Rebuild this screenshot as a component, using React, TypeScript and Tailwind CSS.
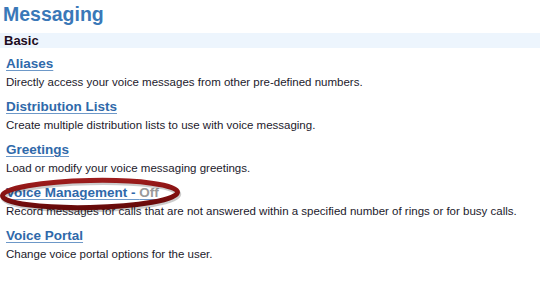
const items = [
  {
    title: "Aliases",
    desc: "Directly access your voice messages from other pre-defined numbers.",
  },
  {
    title: "Distribution Lists",
    desc: "Create multiple distribution lists to use with voice messaging.",
  },
  {
    title: "Greetings",
    desc: "Load or modify your voice messaging greetings.",
  },
  {
    title: "Voice Management - ",
    status: "Off",
    desc: "Record messages for calls that are not answered within a specified number of rings or for busy calls.",
    circled: true,
  },
  {
    title: "Voice Portal",
    desc: "Change voice portal options for the user.",
  },
];

function Circle() {
  return (
    <svg
      className="absolute left-[-6px] top-[-10px] z-10 pointer-events-none"
      width="186"
      height="42"
      viewBox="0 0 186 42"
    >
      <defs>
        <linearGradient id="ring" x1="0" y1="0" x2="0" y2="1">
          <stop offset="0" stopColor="#9c1c1c" />
          <stop offset="0.5" stopColor="#851111" />
          <stop offset="1" stopColor="#650a0a" />
        </linearGradient>
      </defs>
      <g transform="rotate(-1.2 90 19)">
        <ellipse cx="91" cy="21" rx="87.5" ry="13.5" fill="none" stroke="#000" strokeOpacity="0.2" strokeWidth="5.5" />
        <ellipse cx="90" cy="19" rx="87.5" ry="13.5" fill="none" stroke="url(#ring)" strokeWidth="5" />
      </g>
    </svg>
  );
}

export default function App() {
  return (
    <div className="w-[540px] h-[301px] bg-white overflow-hidden font-['Liberation_Sans',Arial,sans-serif]">
      {/* Page title */}
      <h1 className="pt-[3px] pl-[3px] text-[19.5px] leading-[22px] font-bold text-[#3a78b8]">
        Messaging
      </h1>

      {/* Section band */}
      <div className="mt-[8px] h-[15px] bg-[#edf5fd] pl-[4px] text-[13px] leading-[15px] font-bold text-[#1d0b20]">
        Basic
      </div>

      {/* Links */}
      <div className="mt-[8px] pl-[6px] flex flex-col gap-[10px]">
        {items.map((item) => (
          <div key={item.title} className="relative">
            {item.circled && <Circle />}
            <a
              href="#"
              className="block text-[13.5px] leading-[16px] font-bold text-[#2f69aa] underline underline-offset-[2px] decoration-[1px] decoration-[#6d98c8]"
            >
              {item.title}
              {item.status && <span className="text-[#9a9a9a]">{item.status}</span>}
            </a>
            <p className="mt-[3px] text-[11.5px] leading-[14px] text-[#1c1a2c]">{item.desc}</p>
          </div>
        ))}
      </div>
    </div>
  );
}
